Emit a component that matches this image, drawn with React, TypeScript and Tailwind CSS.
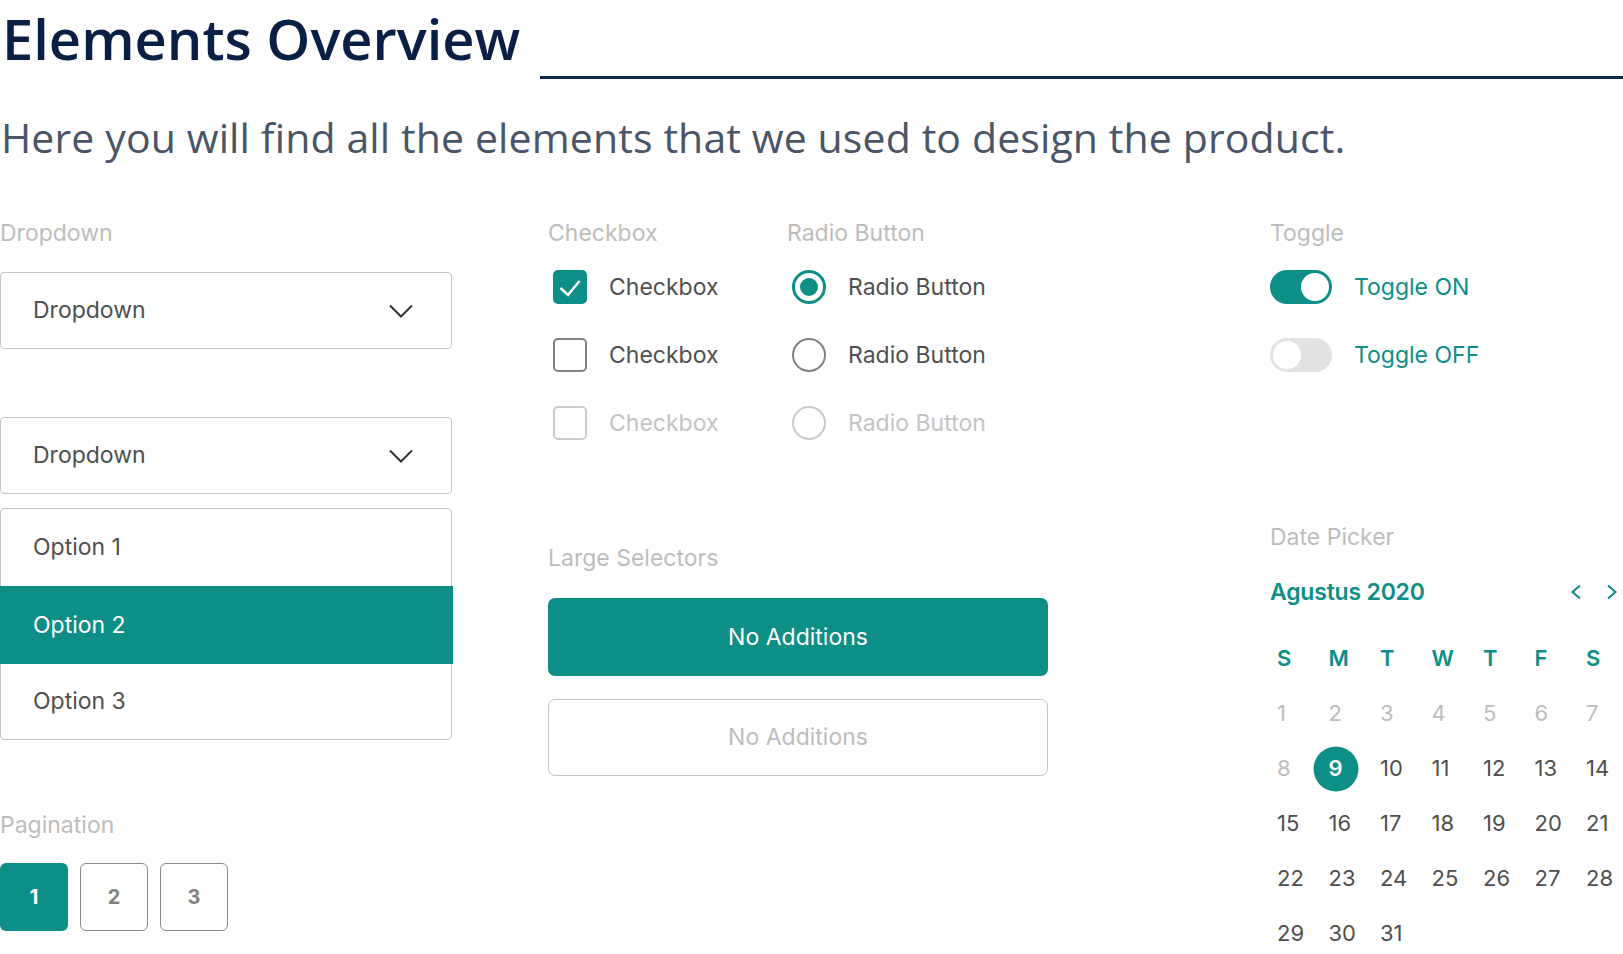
import React from 'react';

function Label({ children }: { children: React.ReactNode }) {
  return <div className="text-[23px] leading-[28px] text-[#bdbdbd]">{children}</div>;
}

function ChevronDown() {
  return (
    <svg width="24" height="14" viewBox="0 0 24 14" fill="none">
      <polyline points="1,1.5 12,12.5 23,1.5" stroke="#333333" strokeWidth="2" />
    </svg>
  );
}

function Dropdown() {
  return (
    <div className="h-[77px] rounded-[4px] border-[1.5px] border-[#c6c6c6] flex items-center justify-between pl-[32px] pr-[38px]">
      <span className="text-[23px] text-[#4f4f4f]">Dropdown</span>
      <ChevronDown />
    </div>
  );
}

function CheckRow({ state, text }: { state: 'on' | 'off' | 'disabled'; text: string }) {
  return (
    <div className="flex items-center h-[34px]">
      {state === 'on' ? (
        <div className="ml-[5px] w-[34px] h-[34px] rounded-[5px] bg-[#0d8e87]">
          <svg width="34" height="34" viewBox="0 0 34 34" fill="none">
            <polyline points="7.5,18 15,25 26.5,11" stroke="#ffffff" strokeWidth="2.5" />
          </svg>
        </div>
      ) : (
        <div
          className={
            state === 'off'
              ? 'ml-[5px] w-[34px] h-[34px] rounded-[5px] border-[2.5px] border-[#828282]'
              : 'ml-[5px] w-[34px] h-[34px] rounded-[5px] border-[2.5px] border-[#cacaca]'
          }
        />
      )}
      <span className={state === 'disabled' ? 'ml-[22px] text-[23px] text-[#c4c4c4]' : 'ml-[22px] text-[23px] text-[#4f4f4f]'}>
        {text}
      </span>
    </div>
  );
}

function RadioRow({ state, text }: { state: 'on' | 'off' | 'disabled'; text: string }) {
  return (
    <div className="flex items-center h-[34px]">
      {state === 'on' ? (
        <div className="ml-[5px] w-[34px] h-[34px] rounded-full border-[3px] border-[#0d8e87] flex items-center justify-center">
          <div className="w-[18px] h-[18px] rounded-full bg-[#0d8e87]" />
        </div>
      ) : (
        <div
          className={
            state === 'off'
              ? 'ml-[5px] w-[34px] h-[34px] rounded-full border-[2.5px] border-[#828282]'
              : 'ml-[5px] w-[34px] h-[34px] rounded-full border-[2.5px] border-[#cacaca]'
          }
        />
      )}
      <span className={state === 'disabled' ? 'ml-[22px] text-[23px] text-[#c4c4c4]' : 'ml-[22px] text-[23px] text-[#4f4f4f]'}>
        {text}
      </span>
    </div>
  );
}

const days = ['S', 'M', 'T', 'W', 'T', 'F', 'S'];

export default function App() {
  const dates = Array.from({ length: 31 }, (_, i) => i + 1);

  return (
    <div className="w-[1623px] h-[954px] overflow-hidden bg-white font-['Inter',sans-serif]">
      {/* header */}
      <div className="flex items-start">
        <h1 className="w-[540px] shrink-0 font-['Open_Sans',sans-serif] font-semibold text-[56px] leading-[77px] text-[#0a1f44] pl-[2px]">
          Elements Overview
        </h1>
        <div className="flex-1 mt-[76px] h-[3px] bg-[#0c2447]" />
      </div>
      <p className="mt-[30px] font-['Open_Sans',sans-serif] text-[41px] leading-[56px] tracking-[0.12px] text-[#4a5567] pl-[1px]">
        Here you will find all the elements that we used to design the product.
      </p>

      <div className="mt-[54px] flex items-start">
        {/* dropdown + pagination */}
        <div className="w-[452px] shrink-0">
          <Label>Dropdown</Label>
          <div className="mt-[25px]">
            <Dropdown />
          </div>
          <div className="mt-[68px]">
            <Dropdown />
          </div>
          <div className="mt-[14px] rounded-[4px] border-[1.5px] border-[#c6c6c6] text-[23px]">
            <div className="h-[77px] flex items-center pl-[32px] text-[#4f4f4f]">Option 1</div>
            <div className="h-[78px] -mx-[1.5px] flex items-center pl-[33.5px] bg-[#0d8e87] text-white">Option 2</div>
            <div className="h-[75px] flex items-center pl-[32px] text-[#4f4f4f]">Option 3</div>
          </div>
          <div className="mt-[71px]">
            <Label>Pagination</Label>
          </div>
          <div className="mt-[24px] flex gap-[12px] text-[20px] font-bold">
            <div className="w-[68px] h-[68px] rounded-[6px] bg-[#0d8e87] text-white flex items-center justify-center">1</div>
            <div className="w-[68px] h-[68px] rounded-[6px] border-[1.5px] border-[#8a8a8a] text-[#828282] flex items-center justify-center">2</div>
            <div className="w-[68px] h-[68px] rounded-[6px] border-[1.5px] border-[#8a8a8a] text-[#828282] flex items-center justify-center">3</div>
          </div>
        </div>

        {/* checkbox, radio, large selectors */}
        <div className="ml-[96px] w-[500px] shrink-0">
          <div className="flex">
            <div className="w-[239px]">
              <Label>Checkbox</Label>
              <div className="mt-[23px] flex flex-col gap-[34px]">
                <CheckRow state="on" text="Checkbox" />
                <CheckRow state="off" text="Checkbox" />
                <CheckRow state="disabled" text="Checkbox" />
              </div>
            </div>
            <div>
              <Label>Radio Button</Label>
              <div className="mt-[23px] flex flex-col gap-[34px]">
                <RadioRow state="on" text="Radio Button" />
                <RadioRow state="off" text="Radio Button" />
                <RadioRow state="disabled" text="Radio Button" />
              </div>
            </div>
          </div>
          <div className="mt-[104px]">
            <Label>Large Selectors</Label>
          </div>
          <div className="mt-[26px] h-[78px] rounded-[7px] bg-[#0d8e87] flex items-center justify-center text-[23px] text-white">
            No Additions
          </div>
          <div className="mt-[23px] h-[77px] rounded-[7px] border-[1.5px] border-[#c6c6c6] flex items-center justify-center text-[23px] text-[#bdbdbd]">
            No Additions
          </div>
        </div>

        {/* toggle + date picker */}
        <div className="ml-[222px] w-[353px] shrink-0">
          <Label>Toggle</Label>
          <div className="mt-[23px] flex flex-col gap-[34px]">
            <div className="flex items-center h-[34px]">
              <div className="w-[62px] h-[34px] rounded-full bg-[#0d8e87] flex items-center justify-end pr-[3px]">
                <div className="w-[28px] h-[28px] rounded-full bg-white" />
              </div>
              <span className="ml-[22px] text-[23px] text-[#0d8e87]">Toggle ON</span>
            </div>
            <div className="flex items-center h-[34px]">
              <div className="w-[62px] h-[34px] rounded-full bg-[#e2e2e2] flex items-center pl-[3px]">
                <div className="w-[28px] h-[28px] rounded-full bg-white" />
              </div>
              <span className="ml-[22px] text-[23px] text-[#0d8e87]">Toggle OFF</span>
            </div>
          </div>

          <div className="mt-[151px]">
            <Label>Date Picker</Label>
          </div>
          <div className="mt-[25px] h-[32px] flex items-center justify-between pr-[5px]">
            <span className="text-[23px] leading-[32px] font-semibold tracking-[-0.2px] text-[#0d8e87]">Agustus 2020</span>
            <div className="flex items-center gap-[24px]">
              <svg width="12" height="16" viewBox="0 0 12 16" fill="none">
                <polyline points="10,1.5 2.5,8 10,14.5" stroke="#0d8e87" strokeWidth="2" />
              </svg>
              <svg width="12" height="16" viewBox="0 0 12 16" fill="none">
                <polyline points="2,1.5 9.5,8 2,14.5" stroke="#0d8e87" strokeWidth="2" />
              </svg>
            </div>
          </div>
          <div className="mt-[23px] pl-[7px] grid grid-cols-[repeat(7,51.5px)] text-[22px] leading-[55px]">
            {days.map((d, i) => (
              <div key={i} className="h-[55px] font-semibold text-[#0d8e87]">
                {d}
              </div>
            ))}
            {dates.map((n) => (
              <div key={n} className={n < 9 ? 'h-[55px] text-[#bdbdbd]' : 'h-[55px] text-[#4f4f4f]'}>
                {n === 9 ? (
                  <span className="relative inline-block">
                    <span className="absolute left-1/2 top-1/2 -translate-x-1/2 -translate-y-1/2 w-[45px] h-[45px] rounded-full bg-[#0d8e87]" />
                    <span className="relative font-semibold text-white">9</span>
                  </span>
                ) : (
                  n
                )}
              </div>
            ))}
          </div>
        </div>
      </div>
    </div>
  );
}
